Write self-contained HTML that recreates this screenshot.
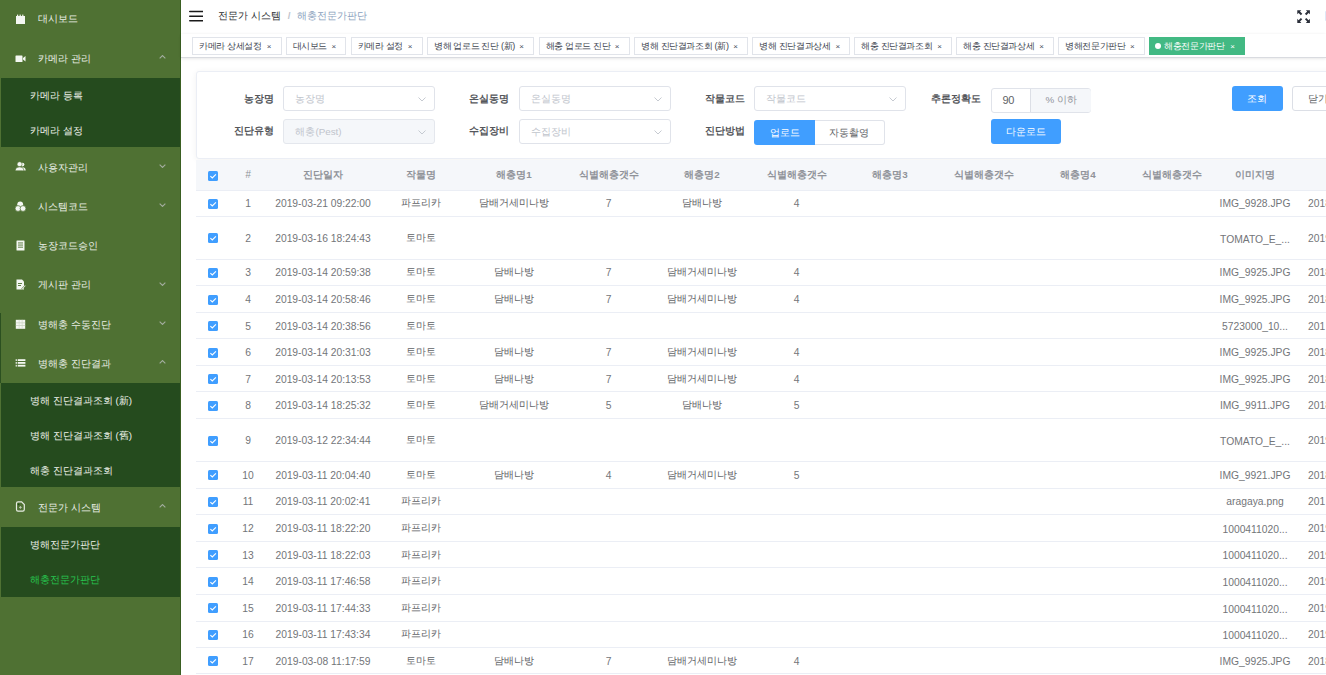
<!DOCTYPE html><html><head><meta charset="utf-8"><style>
*{box-sizing:border-box;margin:0;padding:0}
html,body{width:1326px;height:675px;overflow:hidden;background:#fff;font-family:"Liberation Sans",sans-serif;}
.abs{position:absolute}
#sb{position:absolute;left:0;top:0;width:181px;height:675px;background:#4f7133;border-right:1px solid #3a5f22}
.mi{position:absolute;left:0;width:180px;color:#eaefe7;font-size:9.8px;white-space:nowrap}
.mi .t{position:absolute;left:38px;}
.sub{position:absolute;left:1px;width:179px;background:#254b1e}
.si{position:absolute;left:30px;color:#eef2ea;font-size:9.8px;white-space:nowrap;}
.chev{position:absolute;left:159px;width:7px;height:4px}
.ico{position:absolute;left:15px;width:11px;height:11px}
#nav{position:absolute;left:181px;top:0;width:1145px;height:34px;background:#fff}
#tags{position:absolute;left:181px;top:33.5px;width:1145px;height:24.5px;background:#fff;border-bottom:1px solid #d9dbe0;box-shadow:0 1px 3px 0 rgba(0,0,0,.08),0 0 3px 0 rgba(0,0,0,.03)}
.tag{position:absolute;top:3px;height:18px;border:1px solid #e1e4ea;background:#fff;color:#40454f;font-size:9px;letter-spacing:-0.35px;line-height:16px;padding-left:6px;white-space:nowrap}
.tag .x{position:absolute;font-size:8px;color:#495060;line-height:16px}
.tag.act{background:#42b983;border-color:#42b983;color:#fff}
#card{position:absolute;left:196px;top:71.1px;width:1200px;height:87.9px;border:1px solid #ebeef5;border-radius:3px;background:#fff;box-shadow:0 1px 6px 0 rgba(0,0,0,.06)}
.lbl{position:absolute;font-size:9.8px;font-weight:bold;color:#55575c;text-align:right;white-space:nowrap}
.inp{position:absolute;height:25px;border:1px solid #e0e3ea;border-radius:3px;background:#fff;font-size:9.8px;color:#c0c4cc;white-space:nowrap}
.inp .ph{position:absolute;left:11px;top:0;line-height:23px}
.inp.dis{background:#f5f7fa;border-color:#e4e7ed}
.btn{position:absolute;height:25px;border-radius:3px;background:#409eff;color:#fff;font-size:9.8px;text-align:center;line-height:25px;white-space:nowrap}
#thead{position:absolute;left:196px;top:159.5px;width:1130px;height:31.3px;background:#f5f7fa;border-bottom:1px solid #ebeef5}
.th{position:absolute;color:#909399;font-weight:bold;font-size:9.8px;white-space:nowrap;text-align:center}
.row{position:absolute;left:196px;width:1130px;border-bottom:1px solid #ebeef5;background:#fff}
.td{position:absolute;color:#6c6e73;font-size:10.3px;white-space:nowrap;text-align:center}
.cb{position:absolute;left:12px;width:10px;height:10px;background:#409eff;border-radius:1.5px}
</style></head><body>
<div id="sb">
<div class="mi" style="top:0px;height:39px"><span class="t" style="top:12.1px;line-height:14px">대시보드</span></div>
<svg class="ico" style="top:14.0px" viewBox="0 0 11 11"><rect x="1" y="2" width="9" height="8" fill="#f4f7f2"/><rect x="2" y="0.6" width="1.2" height="2" fill="#f4f7f2"/><rect x="4.6" y="0.6" width="1.2" height="2" fill="#f4f7f2"/><rect x="7.2" y="0.6" width="1.2" height="2" fill="#f4f7f2"/></svg>
<div class="mi" style="top:39px;height:38.5px"><span class="t" style="top:13.2px;line-height:14px">카메라 관리</span></div>
<svg class="ico" style="top:52.8px" viewBox="0 0 11 11"><rect x="0.5" y="2.5" width="7" height="6.5" rx="0.6" fill="#f4f7f2"/><path d="M8 5 L10.5 3 L10.5 8.5 L8 6.5 Z" fill="#f4f7f2"/></svg>
<svg class="chev" style="top:55.2px" viewBox="0 0 7.2 4.2"><path d="M0.6 3.6 L3.6 0.6 L6.6 3.6" fill="none" stroke="#a3ad9f" stroke-width="1.15"/></svg>
<div class="sub" style="top:77.5px;height:69.5px"></div>
<div class="si" style="top:88.9px;line-height:14px;color:#eef2ea">카메라 등록</div>
<div class="si" style="top:123.6px;line-height:14px;color:#eef2ea">카메라 설정</div>
<div class="mi" style="top:147px;height:39.3px"><span class="t" style="top:13.6px;line-height:14px">사용자관리</span></div>
<svg class="ico" style="top:161.2px" viewBox="0 0 11 11"><circle cx="7.6" cy="3.6" r="1.8" fill="#f4f7f2"/><path d="M7.2 9.6 V6.3 C9.2 6.2 10.6 7.2 10.7 9.6 Z" fill="#f4f7f2"/><circle cx="4.6" cy="3.2" r="2.5" fill="#f4f7f2" stroke="#4f7133" stroke-width="0.6"/><path d="M0.2 9.8 C0.4 6.8 2.2 5.9 4.6 5.9 C7 5.9 8.7 6.8 8.9 9.8 Z" fill="#f4f7f2" stroke="#4f7133" stroke-width="0.6"/></svg>
<svg class="chev" style="top:163.7px" viewBox="0 0 7.2 4.2"><path d="M0.6 0.6 L3.6 3.6 L6.6 0.6" fill="none" stroke="#a3ad9f" stroke-width="1.15"/></svg>
<div class="mi" style="top:186.3px;height:39.3px"><span class="t" style="top:13.6px;line-height:14px">시스템코드</span></div>
<svg class="ico" style="top:200.5px" viewBox="0 0 11 11"><circle cx="5.2" cy="3.3" r="2.9" fill="#f4f7f2"/><circle cx="3.0" cy="7.5" r="2.9" fill="#f4f7f2" stroke="#4f7133" stroke-width="0.7"/><circle cx="8.0" cy="7.5" r="2.9" fill="#f4f7f2" stroke="#4f7133" stroke-width="0.7"/></svg>
<svg class="chev" style="top:203.0px" viewBox="0 0 7.2 4.2"><path d="M0.6 0.6 L3.6 3.6 L6.6 0.6" fill="none" stroke="#a3ad9f" stroke-width="1.15"/></svg>
<div class="mi" style="top:225.6px;height:39.3px"><span class="t" style="top:13.6px;line-height:14px">농장코드승인</span></div>
<svg class="ico" style="top:239.8px" viewBox="0 0 11 11"><rect x="1.5" y="0.5" width="8" height="10" rx="0.5" fill="#f4f7f2"/><rect x="3" y="2.5" width="5" height="0.9" fill="#4f7133"/><rect x="3" y="4.6" width="5" height="0.9" fill="#4f7133"/><rect x="3" y="6.7" width="5" height="0.9" fill="#4f7133"/></svg>
<div class="mi" style="top:264.9px;height:39.3px"><span class="t" style="top:13.6px;line-height:14px">게시판 관리</span></div>
<svg class="ico" style="top:279.0px" viewBox="0 0 11 11"><path d="M1.5 0.5 H7 L9 2.5 V10.5 H1.5 Z" fill="#f4f7f2"/><rect x="3" y="4" width="4" height="0.9" fill="#4f7133"/><rect x="3" y="6" width="3" height="0.9" fill="#4f7133"/><path d="M6.5 9.5 L10 6 L10.8 6.8 L7.3 10.3 Z" fill="#f4f7f2" stroke="#4f7133" stroke-width="0.5"/></svg>
<svg class="chev" style="top:281.5px" viewBox="0 0 7.2 4.2"><path d="M0.6 0.6 L3.6 3.6 L6.6 0.6" fill="none" stroke="#a3ad9f" stroke-width="1.15"/></svg>
<div class="mi" style="top:304.2px;height:39.3px"><span class="t" style="top:13.6px;line-height:14px">병해충 수동진단</span></div>
<svg class="ico" style="top:318.3px" viewBox="0 0 11 11"><rect x="0.8" y="1.8" width="9.4" height="9" fill="#f4f7f2"/><rect x="0.8" y="4.6" width="9.4" height="0.6" fill="#b8c6ae"/><rect x="0.8" y="7.2" width="9.4" height="0.6" fill="#b8c6ae"/><rect x="3.8" y="1.8" width="0.6" height="9" fill="#cbd6c3"/><rect x="6.8" y="1.8" width="0.6" height="9" fill="#cbd6c3"/></svg>
<svg class="chev" style="top:320.8px" viewBox="0 0 7.2 4.2"><path d="M0.6 0.6 L3.6 3.6 L6.6 0.6" fill="none" stroke="#a3ad9f" stroke-width="1.15"/></svg>
<div class="mi" style="top:343.5px;height:39.5px"><span class="t" style="top:13.8px;line-height:14px">병해충 진단결과</span></div>
<svg class="ico" style="top:357.8px" viewBox="0 0 11 11"><rect x="0.6" y="1.2" width="1.5" height="1.8" fill="#f4f7f2" opacity="0.8"/><rect x="2.8" y="1.2" width="7.6" height="1.8" fill="#f4f7f2"/><rect x="0.6" y="4.0" width="1.5" height="1.8" fill="#f4f7f2" opacity="0.8"/><rect x="2.8" y="4.0" width="7.6" height="1.8" fill="#f4f7f2"/><rect x="0.6" y="6.8" width="1.5" height="1.8" fill="#f4f7f2" opacity="0.8"/><rect x="2.8" y="6.8" width="7.6" height="1.8" fill="#f4f7f2"/></svg>
<svg class="chev" style="top:360.2px" viewBox="0 0 7.2 4.2"><path d="M0.6 3.6 L3.6 0.6 L6.6 3.6" fill="none" stroke="#a3ad9f" stroke-width="1.15"/></svg>
<div class="sub" style="top:383px;height:104px"></div>
<div class="si" style="top:394.3px;line-height:14px;color:#eef2ea">병해 진단결과조회 (新)</div>
<div class="si" style="top:429.0px;line-height:14px;color:#eef2ea">병해 진단결과조회 (舊)</div>
<div class="si" style="top:463.7px;line-height:14px;color:#eef2ea">해충 진단결과조회</div>
<div class="mi" style="top:487px;height:39.5px"><span class="t" style="top:13.8px;line-height:14px">전문가 시스템</span></div>
<svg class="ico" style="top:501.2px" viewBox="0 0 11 11"><path d="M3 0.9 H6.6 L9.3 3.6 V8.6 Q9.3 10.2 7.7 10.2 H3 Q1.5 10.2 1.5 8.6 V2.5 Q1.5 0.9 3 0.9 Z" fill="none" stroke="#f4f7f2" stroke-width="1.2" opacity="0.92"/><path d="M4 6.4 H6.8 M5.4 5 V7.8" stroke="#f4f7f2" stroke-width="0.9" opacity="0.7"/><circle cx="3.6" cy="3.3" r="0.9" fill="#1f4a14"/></svg>
<svg class="chev" style="top:503.8px" viewBox="0 0 7.2 4.2"><path d="M0.6 3.6 L3.6 0.6 L6.6 3.6" fill="none" stroke="#a3ad9f" stroke-width="1.15"/></svg>
<div class="sub" style="top:526.5px;height:70px"></div>
<div class="si" style="top:538.0px;line-height:14px;color:#eef2ea">병해전문가판단</div>
<div class="si" style="top:573.0px;line-height:14px;color:#27c650">해충전문가판단</div>
<div class="abs" style="left:0;top:313px;width:1px;height:70px;background:#2b5020"></div>
</div>
<div id="nav">
<svg class="abs" style="left:7.8px;top:10px" width="14.4" height="12" viewBox="0 0 15 12" preserveAspectRatio="none"><rect x="0" y="0.7" width="15" height="1.6" rx="0.8" fill="#1a1a1a"/><rect x="0" y="5.4" width="15" height="1.6" rx="0.8" fill="#1a1a1a"/><rect x="0" y="10" width="15" height="1.6" rx="0.8" fill="#1a1a1a"/></svg>
<div class="abs" style="left:37px;top:9px;font-size:9.8px;line-height:14px;white-space:nowrap"><span style="color:#2a2c30">전문가 시스템</span><span style="color:#c0c4cc;font-weight:bold;margin:0 7px 0 7px">/</span><span style="color:#8a9fbd">해충전문가판단</span></div>
<svg class="abs" style="left:1115.6px;top:9.8px" width="13.2" height="13.2" viewBox="0 0 14 14" fill="#2b2f3a"><path d="M0.3 0.3 H4.6 L3.2 1.7 L5.6 4.1 L4.1 5.6 L1.7 3.2 L0.3 4.6 Z"/><path d="M13.7 0.3 H9.4 L10.8 1.7 L8.4 4.1 L9.9 5.6 L12.3 3.2 L13.7 4.6 Z"/><path d="M0.3 13.7 H4.6 L3.2 12.3 L5.6 9.9 L4.1 8.4 L1.7 10.8 L0.3 9.4 Z"/><path d="M13.7 13.7 H9.4 L10.8 12.3 L8.4 9.9 L9.9 8.4 L12.3 10.8 L13.7 9.4 Z"/></svg>
<div class="abs" style="left:1143.5px;top:11px;width:2px;height:10px;background:#dfe8f7;border-radius:1px"></div>
</div>
<div id="tags">
<div class="tag" style="left:11.1px;width:89.6px">카메라 상세설정<span class="x" style="right:9.5px;top:1px;color:#495060">×</span></div>
<div class="tag" style="left:104.5px;width:60.9px">대시보드<span class="x" style="right:9.5px;top:1px;color:#495060">×</span></div>
<div class="tag" style="left:169.7px;width:72.0px">카메라 설정<span class="x" style="right:9.5px;top:1px;color:#495060">×</span></div>
<div class="tag" style="left:245.9px;width:107.2px">병해 업로드 진단 (新)<span class="x" style="right:9.5px;top:1px;color:#495060">×</span></div>
<div class="tag" style="left:357.5px;width:91.2px">해충 업로드 진단<span class="x" style="right:9.5px;top:1px;color:#495060">×</span></div>
<div class="tag" style="left:453.1px;width:114.1px">병해 진단결과조회 (新)<span class="x" style="right:9.5px;top:1px;color:#495060">×</span></div>
<div class="tag" style="left:571.2px;width:98.2px">병해 진단결과상세<span class="x" style="right:9.5px;top:1px;color:#495060">×</span></div>
<div class="tag" style="left:673.1px;width:98.1px">해충 진단결과조회<span class="x" style="right:9.5px;top:1px;color:#495060">×</span></div>
<div class="tag" style="left:775.1px;width:98.0px">해충 진단결과상세<span class="x" style="right:9.5px;top:1px;color:#495060">×</span></div>
<div class="tag" style="left:877.2px;width:86.6px">병해전문가판단<span class="x" style="right:9.5px;top:1px;color:#495060">×</span></div>
<div class="tag act" style="left:967.8px;width:96.3px"><span style="display:inline-block;width:6.2px;height:6.2px;border-radius:50%;background:#fff;margin-left:-0.8px;margin-right:3px;vertical-align:-0.5px"></span>해충전문가판단<span class="x" style="right:9.5px;top:1px;color:#fff">×</span></div>
</div>
<div id="card"></div>
<div class="lbl" style="left:174.0px;width:100px;top:92.0px;line-height:14px">농장명</div>
<div class="inp" style="left:283.4px;top:86.3px;width:151.5px"><span class="ph">농장명</span><svg class="abs" style="right:8px;top:10px" width="8" height="5" viewBox="0 0 8 5"><path d="M0.5 0.5 L4 4 L7.5 0.5" fill="none" stroke="#c0c4cc" stroke-width="0.9"/></svg></div>
<div class="lbl" style="left:174.0px;width:100px;top:124.0px;line-height:14px">진단유형</div>
<div class="inp dis" style="left:283.4px;top:118.7px;width:151.5px"><span class="ph">해충(Pest)</span><svg class="abs" style="right:8px;top:10px" width="8" height="5" viewBox="0 0 8 5"><path d="M0.5 0.5 L4 4 L7.5 0.5" fill="none" stroke="#c0c4cc" stroke-width="0.9"/></svg></div>
<div class="lbl" style="left:409.4px;width:100px;top:92.0px;line-height:14px">온실동명</div>
<div class="inp" style="left:519.2px;top:86.3px;width:151.5px"><span class="ph">온실동명</span><svg class="abs" style="right:8px;top:10px" width="8" height="5" viewBox="0 0 8 5"><path d="M0.5 0.5 L4 4 L7.5 0.5" fill="none" stroke="#c0c4cc" stroke-width="0.9"/></svg></div>
<div class="lbl" style="left:409.4px;width:100px;top:124.0px;line-height:14px">수집장비</div>
<div class="inp" style="left:519.2px;top:118.7px;width:151.5px"><span class="ph">수집장비</span><svg class="abs" style="right:8px;top:10px" width="8" height="5" viewBox="0 0 8 5"><path d="M0.5 0.5 L4 4 L7.5 0.5" fill="none" stroke="#c0c4cc" stroke-width="0.9"/></svg></div>
<div class="lbl" style="left:644.8px;width:100px;top:92.0px;line-height:14px">작물코드</div>
<div class="inp" style="left:754.4px;top:86.3px;width:151.3px"><span class="ph">작물코드</span><svg class="abs" style="right:8px;top:10px" width="8" height="5" viewBox="0 0 8 5"><path d="M0.5 0.5 L4 4 L7.5 0.5" fill="none" stroke="#c0c4cc" stroke-width="0.9"/></svg></div>
<div class="lbl" style="left:644.8px;width:100px;top:124.0px;line-height:14px">진단방법</div>
<div class="btn" style="left:754.4px;top:120.2px;width:60.6px;border-radius:3px 0 0 3px">업로드</div>
<div class="inp" style="left:815px;top:120.2px;width:69.5px;border-radius:0 3px 3px 0;border-left:none;color:#606266;text-align:center;line-height:23px">자동촬영</div>
<div class="lbl" style="left:881.4px;width:100px;top:91.8px;line-height:14px">추론정확도</div>
<div class="inp" style="left:990.6px;top:87.9px;width:100.7px;color:#606266"><span class="abs" style="left:10.8px;line-height:22px;font-size:11px;letter-spacing:-0.2px">90</span><div class="abs" style="left:38.4px;top:0;width:61.3px;height:23px;background:#f5f7fa;border-left:1px solid #dcdfe6;border-radius:0 3px 3px 0;color:#909399;text-align:center;line-height:21px">% 이하</div></div>
<div class="btn" style="left:990.6px;top:119.1px;width:70.6px">다운로드</div>
<div class="btn" style="left:1232px;top:86.3px;width:50.5px">조회</div>
<div class="inp" style="left:1292.4px;top:86.3px;width:50px;color:#606266;border-color:#dcdfe6"><span class="abs" style="left:14.5px;line-height:23px">닫기</span></div>
<div id="thead"></div>
<svg class="abs" style="left:208.3px;top:170.8px" width="10" height="10" viewBox="0 0 10 10"><rect x="0" y="0" width="10" height="10" rx="1.5" fill="#409eff"/><path d="M2.4 5.1 L4.3 7 L7.9 3.3" fill="none" stroke="#fff" stroke-width="1.1"/></svg>
<div class="th" style="left:188.0px;width:120px;top:168px;line-height:14px;font-style:italic;font-weight:normal;font-size:10px;">#</div>
<div class="th" style="left:263.0px;width:120px;top:168px;line-height:14px;">진단일자</div>
<div class="th" style="left:360.5px;width:120px;top:168px;line-height:14px;">작물명</div>
<div class="th" style="left:454.0px;width:120px;top:168px;line-height:14px;">해충명1</div>
<div class="th" style="left:548.5px;width:120px;top:168px;line-height:14px;">식별해충갯수</div>
<div class="th" style="left:642.0px;width:120px;top:168px;line-height:14px;">해충명2</div>
<div class="th" style="left:736.5px;width:120px;top:168px;line-height:14px;">식별해충갯수</div>
<div class="th" style="left:830.0px;width:120px;top:168px;line-height:14px;">해충명3</div>
<div class="th" style="left:924.0px;width:120px;top:168px;line-height:14px;">식별해충갯수</div>
<div class="th" style="left:1018.0px;width:120px;top:168px;line-height:14px;">해충명4</div>
<div class="th" style="left:1112.0px;width:120px;top:168px;line-height:14px;">식별해충갯수</div>
<div class="th" style="left:1195.0px;width:120px;top:168px;line-height:14px;">이미지명</div>
<div class="row" style="top:190.8px;height:26.0px"></div>
<svg class="abs" style="left:208.3px;top:198.9px" width="10" height="10" viewBox="0 0 10 10"><rect x="0" y="0" width="10" height="10" rx="1.5" fill="#409eff"/><path d="M2.4 5.1 L4.3 7 L7.9 3.3" fill="none" stroke="#fff" stroke-width="1.1"/></svg>
<div class="td" style="left:188.0px;width:120px;top:197.3px;line-height:14px;color:#737579">1</div>
<div class="td" style="left:263.0px;width:120px;top:197.3px;line-height:14px;color:#737579">2019-03-21 09:22:00</div>
<div class="td" style="left:360.5px;width:120px;top:196.3px;line-height:14px;color:#606266">파프리카</div>
<div class="td" style="left:454.0px;width:120px;top:196.3px;line-height:14px;color:#606266">담배거세미나방</div>
<div class="td" style="left:548.5px;width:120px;top:197.3px;line-height:14px;color:#737579">7</div>
<div class="td" style="left:642.0px;width:120px;top:196.3px;line-height:14px;color:#606266">담배나방</div>
<div class="td" style="left:736.5px;width:120px;top:197.3px;line-height:14px;color:#737579">4</div>
<div class="td" style="left:1195.0px;width:120px;top:197.3px;line-height:14px;color:#737579">IMG_9928.JPG</div>
<div class="td" style="left:1308px;top:197.3px;line-height:14px;text-align:left;color:#737579">2018</div>
<div class="row" style="top:216.8px;height:42.9px"></div>
<svg class="abs" style="left:208.3px;top:233.3px" width="10" height="10" viewBox="0 0 10 10"><rect x="0" y="0" width="10" height="10" rx="1.5" fill="#409eff"/><path d="M2.4 5.1 L4.3 7 L7.9 3.3" fill="none" stroke="#fff" stroke-width="1.1"/></svg>
<div class="td" style="left:188.0px;width:120px;top:231.8px;line-height:14px;color:#737579">2</div>
<div class="td" style="left:263.0px;width:120px;top:231.8px;line-height:14px;color:#737579">2019-03-16 18:24:43</div>
<div class="td" style="left:360.5px;width:120px;top:230.8px;line-height:14px;color:#606266">토마토</div>
<div class="td" style="left:1195.0px;width:120px;top:232.6px;line-height:14px;color:#737579">TOMATO_E_...</div>
<div class="td" style="left:1308px;top:231.8px;line-height:14px;text-align:left;color:#737579">2019</div>
<div class="row" style="top:259.7px;height:26.5px"></div>
<svg class="abs" style="left:208.3px;top:268.1px" width="10" height="10" viewBox="0 0 10 10"><rect x="0" y="0" width="10" height="10" rx="1.5" fill="#409eff"/><path d="M2.4 5.1 L4.3 7 L7.9 3.3" fill="none" stroke="#fff" stroke-width="1.1"/></svg>
<div class="td" style="left:188.0px;width:120px;top:266.4px;line-height:14px;color:#737579">3</div>
<div class="td" style="left:263.0px;width:120px;top:266.4px;line-height:14px;color:#737579">2019-03-14 20:59:38</div>
<div class="td" style="left:360.5px;width:120px;top:265.4px;line-height:14px;color:#606266">토마토</div>
<div class="td" style="left:454.0px;width:120px;top:265.4px;line-height:14px;color:#606266">담배나방</div>
<div class="td" style="left:548.5px;width:120px;top:266.4px;line-height:14px;color:#737579">7</div>
<div class="td" style="left:642.0px;width:120px;top:265.4px;line-height:14px;color:#606266">담배거세미나방</div>
<div class="td" style="left:736.5px;width:120px;top:266.4px;line-height:14px;color:#737579">4</div>
<div class="td" style="left:1195.0px;width:120px;top:266.4px;line-height:14px;color:#737579">IMG_9925.JPG</div>
<div class="td" style="left:1308px;top:266.4px;line-height:14px;text-align:left;color:#737579">2018</div>
<div class="row" style="top:286.2px;height:26.6px"></div>
<svg class="abs" style="left:208.3px;top:294.6px" width="10" height="10" viewBox="0 0 10 10"><rect x="0" y="0" width="10" height="10" rx="1.5" fill="#409eff"/><path d="M2.4 5.1 L4.3 7 L7.9 3.3" fill="none" stroke="#fff" stroke-width="1.1"/></svg>
<div class="td" style="left:188.0px;width:120px;top:293.0px;line-height:14px;color:#737579">4</div>
<div class="td" style="left:263.0px;width:120px;top:293.0px;line-height:14px;color:#737579">2019-03-14 20:58:46</div>
<div class="td" style="left:360.5px;width:120px;top:292.0px;line-height:14px;color:#606266">토마토</div>
<div class="td" style="left:454.0px;width:120px;top:292.0px;line-height:14px;color:#606266">담배나방</div>
<div class="td" style="left:548.5px;width:120px;top:293.0px;line-height:14px;color:#737579">7</div>
<div class="td" style="left:642.0px;width:120px;top:292.0px;line-height:14px;color:#606266">담배거세미나방</div>
<div class="td" style="left:736.5px;width:120px;top:293.0px;line-height:14px;color:#737579">4</div>
<div class="td" style="left:1195.0px;width:120px;top:293.0px;line-height:14px;color:#737579">IMG_9925.JPG</div>
<div class="td" style="left:1308px;top:293.0px;line-height:14px;text-align:left;color:#737579">2018</div>
<div class="row" style="top:312.8px;height:26.5px"></div>
<svg class="abs" style="left:208.3px;top:321.2px" width="10" height="10" viewBox="0 0 10 10"><rect x="0" y="0" width="10" height="10" rx="1.5" fill="#409eff"/><path d="M2.4 5.1 L4.3 7 L7.9 3.3" fill="none" stroke="#fff" stroke-width="1.1"/></svg>
<div class="td" style="left:188.0px;width:120px;top:319.6px;line-height:14px;color:#737579">5</div>
<div class="td" style="left:263.0px;width:120px;top:319.6px;line-height:14px;color:#737579">2019-03-14 20:38:56</div>
<div class="td" style="left:360.5px;width:120px;top:318.6px;line-height:14px;color:#606266">토마토</div>
<div class="td" style="left:1195.0px;width:120px;top:320.4px;line-height:14px;color:#737579">5723000_10...</div>
<div class="td" style="left:1308px;top:319.6px;line-height:14px;text-align:left;color:#737579">201</div>
<div class="row" style="top:339.3px;height:26.5px"></div>
<svg class="abs" style="left:208.3px;top:347.7px" width="10" height="10" viewBox="0 0 10 10"><rect x="0" y="0" width="10" height="10" rx="1.5" fill="#409eff"/><path d="M2.4 5.1 L4.3 7 L7.9 3.3" fill="none" stroke="#fff" stroke-width="1.1"/></svg>
<div class="td" style="left:188.0px;width:120px;top:346.1px;line-height:14px;color:#737579">6</div>
<div class="td" style="left:263.0px;width:120px;top:346.1px;line-height:14px;color:#737579">2019-03-14 20:31:03</div>
<div class="td" style="left:360.5px;width:120px;top:345.1px;line-height:14px;color:#606266">토마토</div>
<div class="td" style="left:454.0px;width:120px;top:345.1px;line-height:14px;color:#606266">담배나방</div>
<div class="td" style="left:548.5px;width:120px;top:346.1px;line-height:14px;color:#737579">7</div>
<div class="td" style="left:642.0px;width:120px;top:345.1px;line-height:14px;color:#606266">담배거세미나방</div>
<div class="td" style="left:736.5px;width:120px;top:346.1px;line-height:14px;color:#737579">4</div>
<div class="td" style="left:1195.0px;width:120px;top:346.1px;line-height:14px;color:#737579">IMG_9925.JPG</div>
<div class="td" style="left:1308px;top:346.1px;line-height:14px;text-align:left;color:#737579">2018</div>
<div class="row" style="top:365.8px;height:26.6px"></div>
<svg class="abs" style="left:208.3px;top:374.2px" width="10" height="10" viewBox="0 0 10 10"><rect x="0" y="0" width="10" height="10" rx="1.5" fill="#409eff"/><path d="M2.4 5.1 L4.3 7 L7.9 3.3" fill="none" stroke="#fff" stroke-width="1.1"/></svg>
<div class="td" style="left:188.0px;width:120px;top:372.6px;line-height:14px;color:#737579">7</div>
<div class="td" style="left:263.0px;width:120px;top:372.6px;line-height:14px;color:#737579">2019-03-14 20:13:53</div>
<div class="td" style="left:360.5px;width:120px;top:371.6px;line-height:14px;color:#606266">토마토</div>
<div class="td" style="left:454.0px;width:120px;top:371.6px;line-height:14px;color:#606266">담배나방</div>
<div class="td" style="left:548.5px;width:120px;top:372.6px;line-height:14px;color:#737579">7</div>
<div class="td" style="left:642.0px;width:120px;top:371.6px;line-height:14px;color:#606266">담배거세미나방</div>
<div class="td" style="left:736.5px;width:120px;top:372.6px;line-height:14px;color:#737579">4</div>
<div class="td" style="left:1195.0px;width:120px;top:372.6px;line-height:14px;color:#737579">IMG_9925.JPG</div>
<div class="td" style="left:1308px;top:372.6px;line-height:14px;text-align:left;color:#737579">2018</div>
<div class="row" style="top:392.4px;height:26.5px"></div>
<svg class="abs" style="left:208.3px;top:400.8px" width="10" height="10" viewBox="0 0 10 10"><rect x="0" y="0" width="10" height="10" rx="1.5" fill="#409eff"/><path d="M2.4 5.1 L4.3 7 L7.9 3.3" fill="none" stroke="#fff" stroke-width="1.1"/></svg>
<div class="td" style="left:188.0px;width:120px;top:399.1px;line-height:14px;color:#737579">8</div>
<div class="td" style="left:263.0px;width:120px;top:399.1px;line-height:14px;color:#737579">2019-03-14 18:25:32</div>
<div class="td" style="left:360.5px;width:120px;top:398.1px;line-height:14px;color:#606266">토마토</div>
<div class="td" style="left:454.0px;width:120px;top:398.1px;line-height:14px;color:#606266">담배거세미나방</div>
<div class="td" style="left:548.5px;width:120px;top:399.1px;line-height:14px;color:#737579">5</div>
<div class="td" style="left:642.0px;width:120px;top:398.1px;line-height:14px;color:#606266">담배나방</div>
<div class="td" style="left:736.5px;width:120px;top:399.1px;line-height:14px;color:#737579">5</div>
<div class="td" style="left:1195.0px;width:120px;top:399.1px;line-height:14px;color:#737579">IMG_9911.JPG</div>
<div class="td" style="left:1308px;top:399.1px;line-height:14px;text-align:left;color:#737579">2018</div>
<div class="row" style="top:418.9px;height:43.1px"></div>
<svg class="abs" style="left:208.3px;top:435.6px" width="10" height="10" viewBox="0 0 10 10"><rect x="0" y="0" width="10" height="10" rx="1.5" fill="#409eff"/><path d="M2.4 5.1 L4.3 7 L7.9 3.3" fill="none" stroke="#fff" stroke-width="1.1"/></svg>
<div class="td" style="left:188.0px;width:120px;top:433.9px;line-height:14px;color:#737579">9</div>
<div class="td" style="left:263.0px;width:120px;top:433.9px;line-height:14px;color:#737579">2019-03-12 22:34:44</div>
<div class="td" style="left:360.5px;width:120px;top:432.9px;line-height:14px;color:#606266">토마토</div>
<div class="td" style="left:1195.0px;width:120px;top:434.8px;line-height:14px;color:#737579">TOMATO_E_...</div>
<div class="td" style="left:1308px;top:433.9px;line-height:14px;text-align:left;color:#737579">2019</div>
<div class="row" style="top:462.0px;height:26.6px"></div>
<svg class="abs" style="left:208.3px;top:470.4px" width="10" height="10" viewBox="0 0 10 10"><rect x="0" y="0" width="10" height="10" rx="1.5" fill="#409eff"/><path d="M2.4 5.1 L4.3 7 L7.9 3.3" fill="none" stroke="#fff" stroke-width="1.1"/></svg>
<div class="td" style="left:188.0px;width:120px;top:468.8px;line-height:14px;color:#737579">10</div>
<div class="td" style="left:263.0px;width:120px;top:468.8px;line-height:14px;color:#737579">2019-03-11 20:04:40</div>
<div class="td" style="left:360.5px;width:120px;top:467.8px;line-height:14px;color:#606266">토마토</div>
<div class="td" style="left:454.0px;width:120px;top:467.8px;line-height:14px;color:#606266">담배나방</div>
<div class="td" style="left:548.5px;width:120px;top:468.8px;line-height:14px;color:#737579">4</div>
<div class="td" style="left:642.0px;width:120px;top:467.8px;line-height:14px;color:#606266">담배거세미나방</div>
<div class="td" style="left:736.5px;width:120px;top:468.8px;line-height:14px;color:#737579">5</div>
<div class="td" style="left:1195.0px;width:120px;top:468.8px;line-height:14px;color:#737579">IMG_9921.JPG</div>
<div class="td" style="left:1308px;top:468.8px;line-height:14px;text-align:left;color:#737579">2018</div>
<div class="row" style="top:488.6px;height:26.6px"></div>
<svg class="abs" style="left:208.3px;top:497.0px" width="10" height="10" viewBox="0 0 10 10"><rect x="0" y="0" width="10" height="10" rx="1.5" fill="#409eff"/><path d="M2.4 5.1 L4.3 7 L7.9 3.3" fill="none" stroke="#fff" stroke-width="1.1"/></svg>
<div class="td" style="left:188.0px;width:120px;top:495.4px;line-height:14px;color:#737579">11</div>
<div class="td" style="left:263.0px;width:120px;top:495.4px;line-height:14px;color:#737579">2019-03-11 20:02:41</div>
<div class="td" style="left:360.5px;width:120px;top:494.4px;line-height:14px;color:#606266">파프리카</div>
<div class="td" style="left:1195.0px;width:120px;top:495.4px;line-height:14px;color:#737579">aragaya.png</div>
<div class="td" style="left:1308px;top:495.4px;line-height:14px;text-align:left;color:#737579">201</div>
<div class="row" style="top:515.2px;height:26.6px"></div>
<svg class="abs" style="left:208.3px;top:523.6px" width="10" height="10" viewBox="0 0 10 10"><rect x="0" y="0" width="10" height="10" rx="1.5" fill="#409eff"/><path d="M2.4 5.1 L4.3 7 L7.9 3.3" fill="none" stroke="#fff" stroke-width="1.1"/></svg>
<div class="td" style="left:188.0px;width:120px;top:522.0px;line-height:14px;color:#737579">12</div>
<div class="td" style="left:263.0px;width:120px;top:522.0px;line-height:14px;color:#737579">2019-03-11 18:22:20</div>
<div class="td" style="left:360.5px;width:120px;top:521.0px;line-height:14px;color:#606266">파프리카</div>
<div class="td" style="left:1195.0px;width:120px;top:522.8px;line-height:14px;color:#737579">1000411020...</div>
<div class="td" style="left:1308px;top:522.0px;line-height:14px;text-align:left;color:#737579">2019</div>
<div class="row" style="top:541.8px;height:26.6px"></div>
<svg class="abs" style="left:208.3px;top:550.2px" width="10" height="10" viewBox="0 0 10 10"><rect x="0" y="0" width="10" height="10" rx="1.5" fill="#409eff"/><path d="M2.4 5.1 L4.3 7 L7.9 3.3" fill="none" stroke="#fff" stroke-width="1.1"/></svg>
<div class="td" style="left:188.0px;width:120px;top:548.6px;line-height:14px;color:#737579">13</div>
<div class="td" style="left:263.0px;width:120px;top:548.6px;line-height:14px;color:#737579">2019-03-11 18:22:03</div>
<div class="td" style="left:360.5px;width:120px;top:547.6px;line-height:14px;color:#606266">파프리카</div>
<div class="td" style="left:1195.0px;width:120px;top:549.4px;line-height:14px;color:#737579">1000411020...</div>
<div class="td" style="left:1308px;top:548.6px;line-height:14px;text-align:left;color:#737579">2019</div>
<div class="row" style="top:568.4px;height:26.6px"></div>
<svg class="abs" style="left:208.3px;top:576.8px" width="10" height="10" viewBox="0 0 10 10"><rect x="0" y="0" width="10" height="10" rx="1.5" fill="#409eff"/><path d="M2.4 5.1 L4.3 7 L7.9 3.3" fill="none" stroke="#fff" stroke-width="1.1"/></svg>
<div class="td" style="left:188.0px;width:120px;top:575.2px;line-height:14px;color:#737579">14</div>
<div class="td" style="left:263.0px;width:120px;top:575.2px;line-height:14px;color:#737579">2019-03-11 17:46:58</div>
<div class="td" style="left:360.5px;width:120px;top:574.2px;line-height:14px;color:#606266">파프리카</div>
<div class="td" style="left:1195.0px;width:120px;top:576.0px;line-height:14px;color:#737579">1000411020...</div>
<div class="td" style="left:1308px;top:575.2px;line-height:14px;text-align:left;color:#737579">2019</div>
<div class="row" style="top:595.0px;height:26.5px"></div>
<svg class="abs" style="left:208.3px;top:603.4px" width="10" height="10" viewBox="0 0 10 10"><rect x="0" y="0" width="10" height="10" rx="1.5" fill="#409eff"/><path d="M2.4 5.1 L4.3 7 L7.9 3.3" fill="none" stroke="#fff" stroke-width="1.1"/></svg>
<div class="td" style="left:188.0px;width:120px;top:601.8px;line-height:14px;color:#737579">15</div>
<div class="td" style="left:263.0px;width:120px;top:601.8px;line-height:14px;color:#737579">2019-03-11 17:44:33</div>
<div class="td" style="left:360.5px;width:120px;top:600.8px;line-height:14px;color:#606266">파프리카</div>
<div class="td" style="left:1195.0px;width:120px;top:602.5px;line-height:14px;color:#737579">1000411020...</div>
<div class="td" style="left:1308px;top:601.8px;line-height:14px;text-align:left;color:#737579">2019</div>
<div class="row" style="top:621.5px;height:26.6px"></div>
<svg class="abs" style="left:208.3px;top:629.9px" width="10" height="10" viewBox="0 0 10 10"><rect x="0" y="0" width="10" height="10" rx="1.5" fill="#409eff"/><path d="M2.4 5.1 L4.3 7 L7.9 3.3" fill="none" stroke="#fff" stroke-width="1.1"/></svg>
<div class="td" style="left:188.0px;width:120px;top:628.3px;line-height:14px;color:#737579">16</div>
<div class="td" style="left:263.0px;width:120px;top:628.3px;line-height:14px;color:#737579">2019-03-11 17:43:34</div>
<div class="td" style="left:360.5px;width:120px;top:627.3px;line-height:14px;color:#606266">파프리카</div>
<div class="td" style="left:1195.0px;width:120px;top:629.1px;line-height:14px;color:#737579">1000411020...</div>
<div class="td" style="left:1308px;top:628.3px;line-height:14px;text-align:left;color:#737579">2019</div>
<div class="row" style="top:648.1px;height:26.4px"></div>
<svg class="abs" style="left:208.3px;top:656.4px" width="10" height="10" viewBox="0 0 10 10"><rect x="0" y="0" width="10" height="10" rx="1.5" fill="#409eff"/><path d="M2.4 5.1 L4.3 7 L7.9 3.3" fill="none" stroke="#fff" stroke-width="1.1"/></svg>
<div class="td" style="left:188.0px;width:120px;top:654.8px;line-height:14px;color:#737579">17</div>
<div class="td" style="left:263.0px;width:120px;top:654.8px;line-height:14px;color:#737579">2019-03-08 11:17:59</div>
<div class="td" style="left:360.5px;width:120px;top:653.8px;line-height:14px;color:#606266">토마토</div>
<div class="td" style="left:454.0px;width:120px;top:653.8px;line-height:14px;color:#606266">담배나방</div>
<div class="td" style="left:548.5px;width:120px;top:654.8px;line-height:14px;color:#737579">7</div>
<div class="td" style="left:642.0px;width:120px;top:653.8px;line-height:14px;color:#606266">담배거세미나방</div>
<div class="td" style="left:736.5px;width:120px;top:654.8px;line-height:14px;color:#737579">4</div>
<div class="td" style="left:1195.0px;width:120px;top:654.8px;line-height:14px;color:#737579">IMG_9925.JPG</div>
<div class="td" style="left:1308px;top:654.8px;line-height:14px;text-align:left;color:#737579">2018</div>
</body></html>
